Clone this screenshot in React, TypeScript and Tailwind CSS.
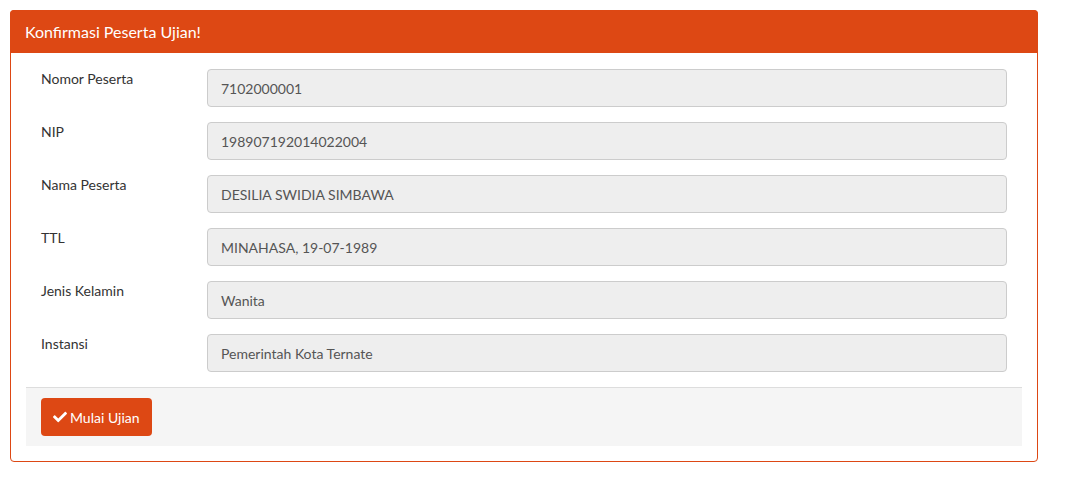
const rows = [
  { label: "Nomor Peserta", value: "7102000001" },
  { label: "NIP", value: "198907192014022004" },
  { label: "Nama Peserta", value: "DESILIA SWIDIA SIMBAWA" },
  { label: "TTL", value: "MINAHASA, 19-07-1989" },
  { label: "Jenis Kelamin", value: "Wanita" },
  { label: "Instansi", value: "Pemerintah Kota Ternate" },
];

function CheckIcon() {
  return (
    <svg viewBox="0 0 512 512" className="w-[14px] h-[14px]" fill="currentColor">
      <path d="M173.898 439.404l-166.4-166.4c-9.997-9.997-9.997-26.206 0-36.204l36.203-36.204c9.997-9.998 26.207-9.998 36.204 0L192 312.69 432.095 72.596c9.997-9.997 26.207-9.997 36.204 0l36.203 36.204c9.997 9.997 9.997 26.206 0 36.204l-294.4 294.401c-9.998 9.997-26.207 9.997-36.204-.001z" />
    </svg>
  );
}

export default function App() {
  return (
    <div className="min-h-screen bg-white pt-[10px] pl-[10px] font-['Lato',sans-serif]">
      <div className="w-[1028px] border border-[#dd4814] rounded-[4px] bg-white">
        <div className="h-[43px] bg-[#dd4814] px-[15px] flex items-center text-white text-[16px] -mx-px -mt-px rounded-t-[4px]">
          Konfirmasi Peserta Ujian!
        </div>
        <div className="px-[15px] pt-[16px] pb-[15px]">
          <div className="flex flex-col gap-[15px]">
            {rows.map((r) => (
              <div key={r.label} className="flex">
                <div className="w-[166px] px-[15px] text-[14px] leading-[20px] text-[#333]">
                  {r.label}
                </div>
                <div className="flex-1 px-[15px]">
                  <div className="h-[38px] bg-[#eee] border border-[#ccc] rounded-[4px] px-[13px] flex items-center text-[14px] text-[#555]">
                    {r.value}
                  </div>
                </div>
              </div>
            ))}
          </div>
          <div className="mt-[15px] bg-[#f5f5f5] border-t border-[#ddd] px-[15px] py-[10px]">
            <button className="h-[38px] px-[12px] bg-[#dd4814] text-white rounded-[4px] flex items-center gap-[3px] text-[14px]">
              <CheckIcon />
              Mulai Ujian
            </button>
          </div>
        </div>
      </div>
    </div>
  );
}
